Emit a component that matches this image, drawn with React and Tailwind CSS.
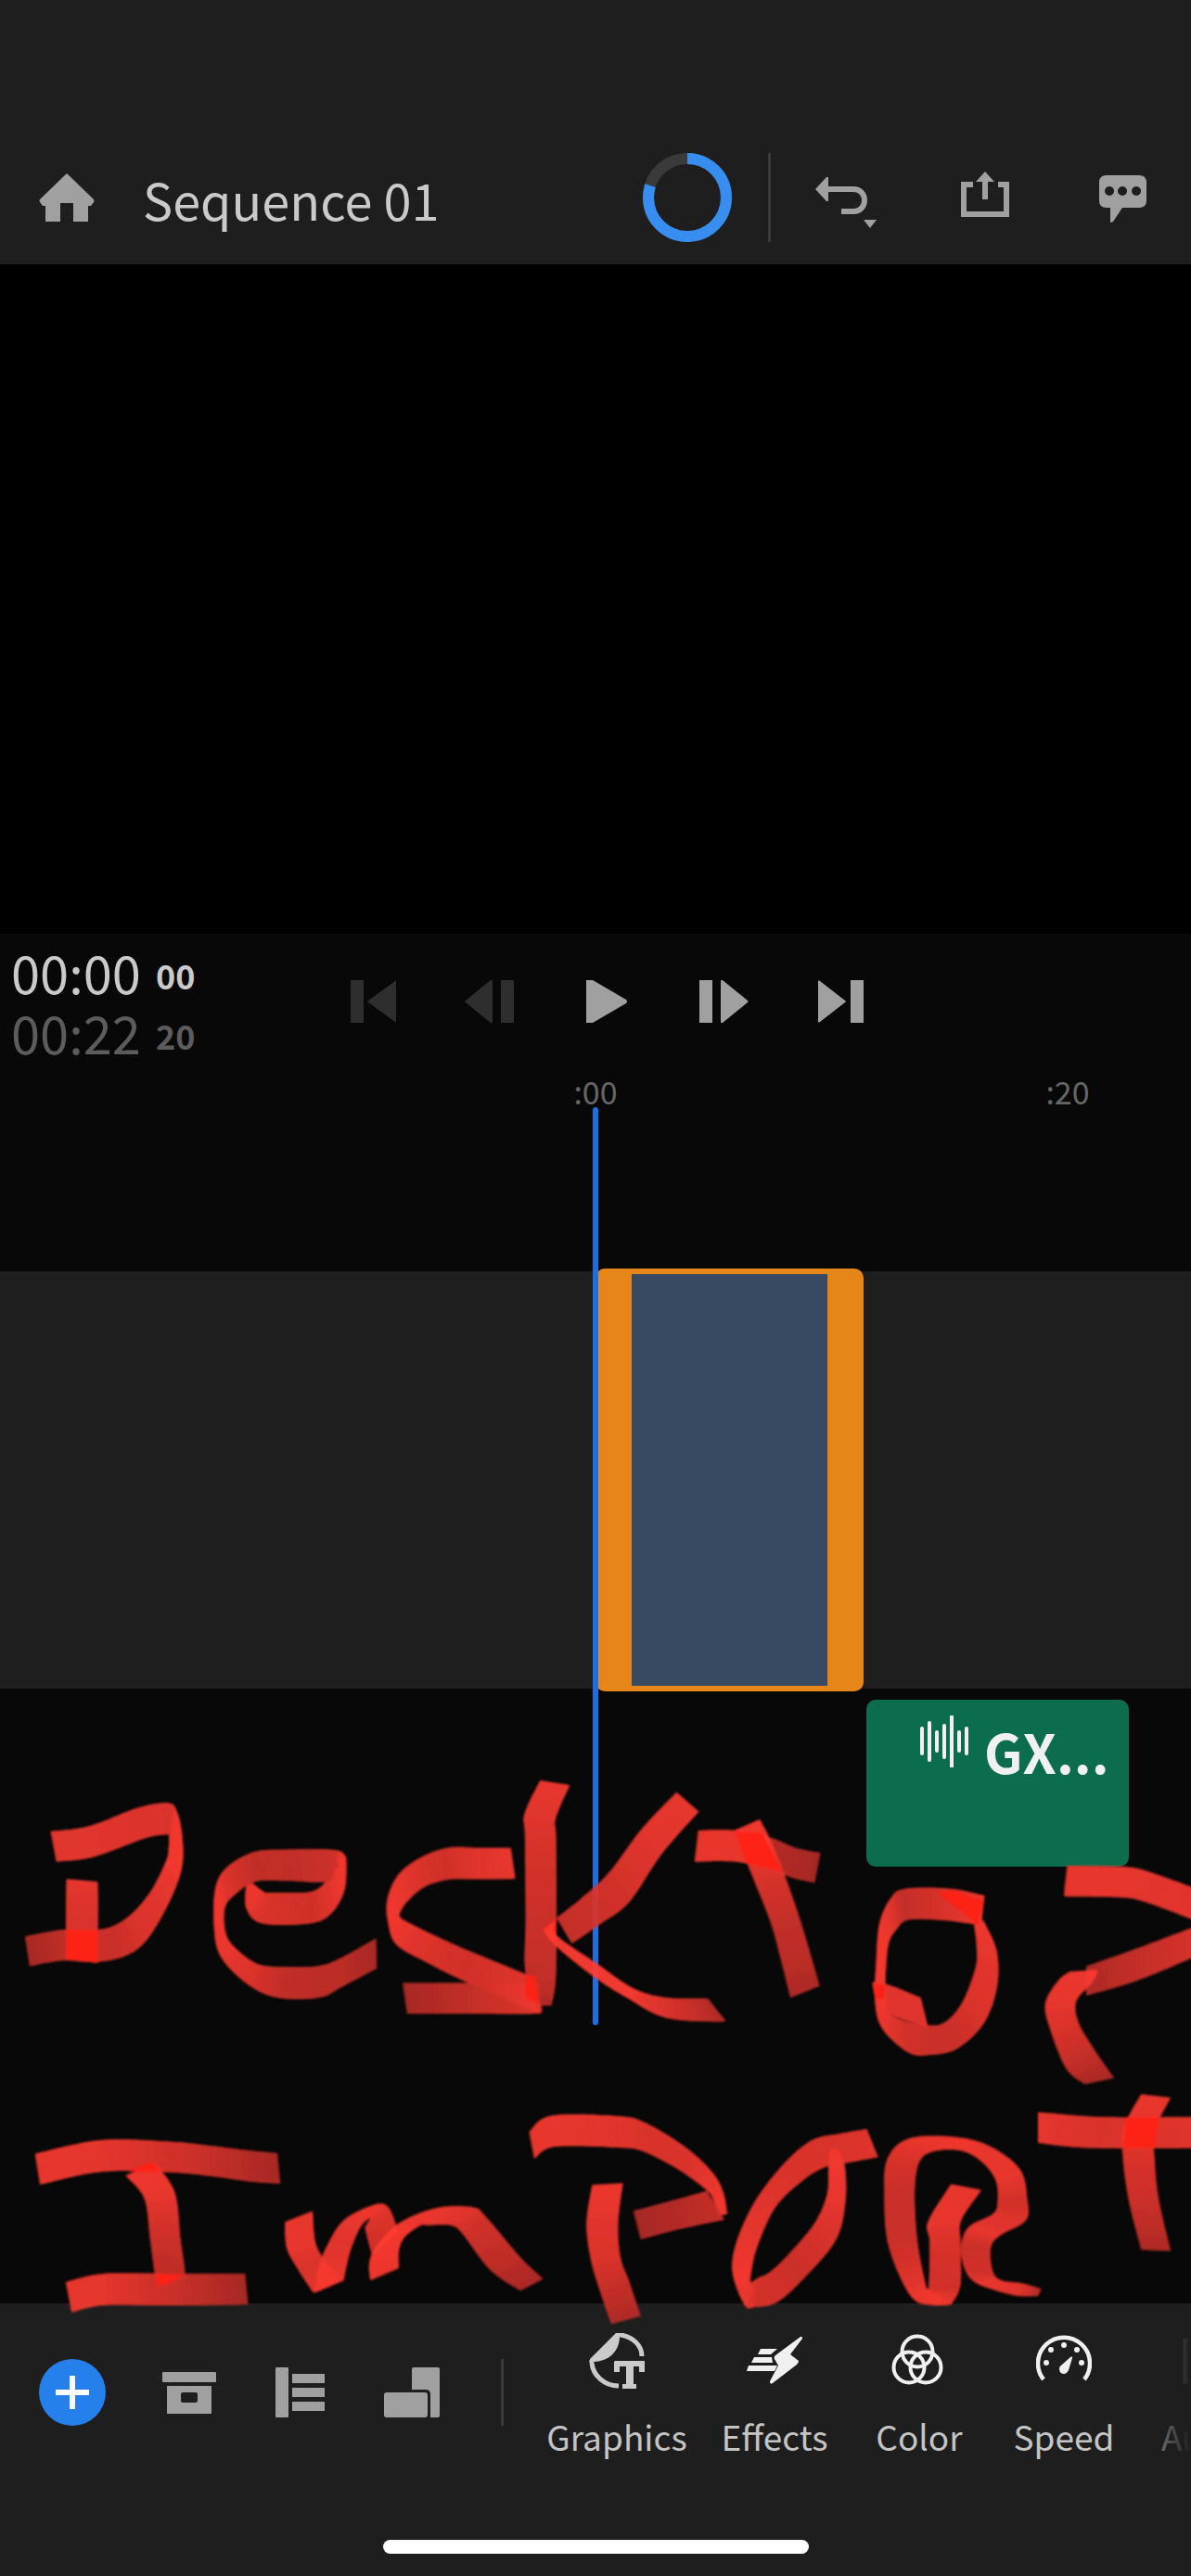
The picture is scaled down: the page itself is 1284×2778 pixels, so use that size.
import React from "react";

const FONT = "font-['Noto_Sans_CJK_SC','Noto_Sans',sans-serif]";

function Icon({ box, className, children }) {
  return (
    <svg viewBox={box} className={className} fill="currentColor" aria-hidden="true">
      {children}
    </svg>
  );
}

/* ---------- Freehand annotation ---------- */

// A ribbon is a list of [x1, y1, x2, y2, shade]: both edges of the marker and how worn it is.
const upperLeft = [
  [[133,222,148,320,0.2],[235,205,245,305,0.2],[360,147,385,243,0.25],[440,130,443,232,0.3],[465,155,445,234,0],[480,240,444,275,0],[478,345,438,315,0],[440,465,400,410,0.2],[385,575,350,485,0.3],[330,625,300,527,0.5],[250,645,250,541,0.5],[165,640,160,541,0.7],[78,658,66,562,1]],
  [[175,376,257,385,0.1],[174,460,258,460,0.25],[173,635,257,648,0.4]],
  [[660,385,648,395,0],[695,418,648,470,0.1],[715,420,690,520,0.3],[815,418,815,520,0.4],[855,388,870,490,0.2],[885,340,905,420,0],[888,310,912,340,0],[884,320,906,296,0],[866,382,870,281,0.5],[760,382,750,281,0.6],[675,384,670,288,0.6],[620,425,600,335,0.3],[592,470,568,400,0],[594,550,563,520,0],[620,600,580,625,0.1],[680,652,650,715,0.3],[750,660,730,760,0.6],[840,657,840,760,0.7],[900,630,900,725,0.7],[990,568,992,665,1]],
  [[1345,275,1357,375,0.1],[1260,275,1260,377,0.2],[1180,275,1185,377,0.4],[1110,305,1120,400,0.3],[1050,360,1075,445,0.1],[1020,440,1055,480,0],[1022,520,1054,500,0],[1045,590,1080,520,0.1],[1130,650,1150,562,0.3],[1220,705,1230,606,0.4],[1415,808,1392,688,0.2]],
  [[1418,700,1422,800,0.1],[1400,712,1410,812,0.2],[1240,712,1240,812,0.6],[1060,712,1072,812,1]],
  [[1422,57,1500,72,0.1],[1381,165,1463,180,0.2],[1382,240,1464,245,0.3],[1384,500,1465,500,0.5],[1384,680,1463,700,0.6],[1425,785,1452,785,0.9]],
];
const upperLeftHot = [
  [[175,541,257,541],[175,635,257,647]],
  [[1385,690,1410,690],[1383,760,1420,780]],
  [[1465,502,1428,540],[1465,575,1450,575]],
];
const upperRight = [
  [[297,455,352,518,0.1],[210,575,260,655,0.2],[130,715,180,810,0.4],[60,800,110,880,0.5],[0,862,38,945,0.6]],
  [[0,870,-33,900,0],[0,918,0,955,0],[100,1010,95,1055,0],[190,1090,180,1125,0],[270,1120,270,1185,0.3],[365,1122,400,1198,0.8],[374,1127,417,1192,1]],
  [[350,579,341,680,0.1],[440,579,450,681,0.1],[530,603,545,715,0.8],[590,635,590,735,0.9],[652,652,638,748,1]],
  [[440,578,502,543,0],[460,650,525,600,0],[485,730,560,710,0.3],[530,880,600,860,0.6],[555,1000,630,990,0.7],[578,1120,650,1082,0.9]],
  [[1058,790,1050,886,0],[970,767,960,870,0.3],[860,768,870,868,0.6],[825,800,840,900,0.2],[798,880,822,940,0],[790,1000,815,1010,0],[787,1130,812,1130,0],[805,1220,822,1170,0.1],[870,1298,860,1195,0.4],[925,1305,925,1210,0.5],[990,1285,965,1195,0.5],[1055,1205,1005,1130,0.3],[1088,1090,1036,1020,0.2],[1088,970,1038,950,0.1],[1055,870,1032,885,0]],
  [[780,1070,785,1110,0],[820,1078,822,1172,0.2],[900,1120,918,1215,0.2]],
  [[1262,692,1253,792,0.1],[1410,697,1385,795,0.1],[1480,720,1450,808,0.15],[1590,772,1590,876,0.2]],
  [[1590,884,1590,980,0.3],[1440,958,1440,1062,0.6],[1310,1018,1310,1113,0.9]],
  [[1338,1030,1270,1035,0],[1325,1070,1240,1065,0.1],[1285,1130,1208,1140,0.1],[1290,1200,1222,1230,0.3],[1330,1290,1260,1350,0.6],[1378,1380,1305,1400,1]],
];
const upperRightHot = [
  [[440,582,508,588],[470,685,558,712]],
  [[980,772,942,780],[1054,806,1042,885]],
  [[784,1075,812,1080],[790,1125,808,1125]],
];
const lowerLeft = [
  [[92,245,105,345,0.1],[265,201,268,303,0.15],[450,206,450,305,0.4],[560,220,560,318,0.6],[660,235,660,335,0.8],[730,243,738,342,1]],
  [[330,315,408,275,0],[380,390,460,370,0.1],[395,520,475,520,0.5],[408,640,487,640,0.7],[415,675,470,655,0.5]],
  [[173,660,188,758,0.1],[275,633,275,735,0.15],[450,633,450,736,0.5],[645,633,653,733,1]],
  [[750,465,823,430,0.1],[755,550,830,530,0.1],[785,620,855,590,0.3],[825,695,900,655,0.1]],
  [[830,695,905,655,0.1],[838,620,912,610,0.1],[858,550,925,550,0.2],[905,460,950,480,0.1],[985,410,975,452,0],[1020,415,965,475,0.2],[1040,465,962,490,0.3],[1045,500,980,575,0.5]],
  [[975,655,1050,615,0.1],[972,600,1050,560,0],[990,545,1065,515,0],[1050,470,1105,478,0],[1150,420,1130,476,0.1],[1245,418,1185,476,0.2],[1280,450,1215,500,0.4],[1370,580,1290,620,0.7],[1430,650,1370,688,1]],
];
const lowerLeftHot = [
  [[335,302,392,274],[420,302,410,280]],
  [[410,635,485,635],[415,672,445,665]],
];
const lowerRight = [
  [[-68,205,-55,292,0.1],[-14,152,-5,252,0.1],[150,153,155,255,0.2],[220,175,215,268,0.3],[320,255,300,325,0.3],[385,335,370,392,0.1],[412,400,388,425,0],[422,470,400,475,0]],
  [[372,395,415,488,0.6],[290,425,300,520,0.8],[190,460,208,552,1]],
  [[88,375,164,370,0],[74,500,152,500,0.2],[85,620,158,610,0.3],[110,730,180,690,0.6],[135,825,208,800,0.9]],
  [[767,195,795,286,0.2],[700,210,715,305,0.3],[630,232,660,320,0.3],[560,310,605,365,0.3],[490,430,540,450,0.2],[445,560,495,580,0.1],[435,660,480,670,0],[465,765,482,690,0.1],[490,771,500,675,0.4],[545,755,525,660,0.4],[610,680,570,605,0.5],[690,555,635,505,0.3],[714,430,668,410,0.1],[712,310,672,320,0],[695,260,675,260,0]],
  [[975,373,1050,392,0.1],[918,495,1000,490,0.1],[922,560,998,560,0.3],[920,700,998,700,0.4],[915,712,975,763,0]],
  [[915,710,975,763,0],[914,706,930,765,0],[912,700,875,735,0.1],[892,560,820,570,0.5],[885,400,810,400,0.5],[897,300,818,290,0.3],[935,266,870,226,0.1],[1000,265,980,220,0],[1050,300,1070,250,0.1],[1085,360,1145,325,0.1],[1090,430,1163,420,0.4],[1078,470,1160,490,0.25],[1020,510,1095,540,0.1],[1000,570,1073,580,0.5],[1008,645,1078,655,0.4],[1040,695,1100,685,0.1],[1130,732,1150,694,0.2],[1190,735,1198,712,0.9]],
  [[1190,140,1190,240,0.1],[1350,156,1330,257,0.3],[1590,156,1590,257,0.2]],
  [[1445,82,1518,93,0.1],[1402,190,1478,200,0.1],[1400,290,1478,290,0.3],[1415,430,1488,420,0.5],[1445,585,1518,590,0.9]],
];
const lowerRightHot = [[[1410,156,1490,156],[1400,256,1478,256]]];

const spline = (a, b, c, d, t) =>
  0.5 * (2 * b + (c - a) * t + (2 * a - 5 * b + 4 * c - d) * t * t + (3 * b - a - 3 * c + d) * t * t * t);

function sample(points) {
  const out = [];
  for (let i = 0; i < points.length - 1; i++) {
    const a = points[Math.max(i - 1, 0)];
    const b = points[i];
    const c = points[i + 1];
    const d = points[Math.min(i + 2, points.length - 1)];
    const span = Math.max(Math.hypot(c[0] - b[0], c[1] - b[1]), Math.hypot(c[2] - b[2], c[3] - b[3]));
    const steps = Math.max(4, Math.round(span / 9));
    for (let s = 0; s < steps; s++) {
      const t = s / steps;
      out.push([0, 1, 2, 3].map((k) => spline(a[k], b[k], c[k], d[k], t)).concat(b[4] + (c[4] - b[4]) * t));
    }
  }
  out.push(points[points.length - 1]);
  return out;
}

function tone(s) {
  const mix = (a, b) => Math.round(a + (b - a) * s);
  return `rgb(${mix(255, 175)},${mix(60, 43)},${mix(50, 39)})`;
}

function Ribbon({ points }) {
  const pts = sample(points);
  return (
    <g opacity="0.94">
      {pts.slice(0, -1).map((p, i) => {
        const q = pts[Math.min(i + 2, pts.length - 1)];
        const m = pts[i + 1];
        return (
          <polygon
            key={i}
            fill={tone(p[4])}
            points={`${p[0]},${p[1]} ${m[0]},${m[1]} ${q[0]},${q[1]} ${q[2]},${q[3]} ${m[2]},${m[3]} ${p[2]},${p[3]}`}
          />
        );
      })}
    </g>
  );
}

function Scribble({ strokes, hot, transform }) {
  return (
    <g transform={transform}>
      {strokes.map((s, i) => (
        <Ribbon key={i} points={s} />
      ))}
      {hot.map(([a, b], i) => (
        <polygon key={i} fill="#ff1f15" fillOpacity="0.9" points={`${a[0]},${a[1]} ${a[2]},${a[3]} ${b[2]},${b[3]} ${b[0]},${b[1]}`} />
      ))}
    </g>
  );
}

function Annotation() {
  return (
    <svg
      viewBox="0 0 1284 660"
      role="img"
      aria-label="Handwritten note: Desktop import"
      className="pointer-events-none absolute left-0 top-[736px] z-20 w-full"
    >
      <defs>
        <filter id="soft" x="-5%" y="-5%" width="110%" height="110%">
          <feGaussianBlur stdDeviation="1" />
        </filter>
      </defs>
      <g filter="url(#soft)">
        <Scribble strokes={upperLeft} hot={upperLeftHot} transform="translate(0 20) scale(0.4095 0.3333)" />
        <Scribble strokes={upperRight} hot={upperRightHot} transform="translate(600 -100) scale(0.4362 0.3333)" />
        <Scribble strokes={lowerLeft} hot={lowerLeftHot} transform="translate(0 360) scale(0.4095 0.3333)" />
        <Scribble strokes={lowerRight} hot={lowerRightHot} transform="translate(600 350) scale(0.4362 0.3333)" />
      </g>
    </svg>
  );
}

/* ---------- Header ---------- */

function Header() {
  return (
    <header className="flex items-center bg-[#1e1e1e] pt-[141px] pr-[38px] pl-9 text-[#a0a0a0]">
      <button aria-label="Home">
        <Icon box="36 177 72 72" className="size-[72px]">
          <path d="M72 187 L101 215 Q102 217 101 218 L98 222 H95 V239 H79 V219 H65 V239 H49 V222 H46 L43 218 Q42 217 43 215 Z" />
        </Icon>
      </button>
      <h1 className="ml-[46px] pt-1 text-[54px] leading-[140px] text-[#cacaca]">Sequence 01</h1>
      <div className="ml-auto flex items-center">
        <svg viewBox="0 0 96 96" className="size-24" role="img" aria-label="Sync progress 80%">
          <circle cx="48" cy="48" r="42" fill="none" stroke="#3a3a3a" strokeWidth="12" />
          <circle cx="48" cy="48" r="42" fill="none" stroke="#378ef0" strokeWidth="12" pathLength="100" strokeDasharray="80 100" transform="rotate(-90 48 48)" />
        </svg>
        <div className="ml-[39px] h-24 w-[3px] bg-[#3a3a3a]" />
        <button aria-label="Undo" className="ml-[45px]">
          <Icon box="876 177 72 72" className="size-[72px]">
            <path d="M879 204 L891 191 H893 V201 H920 C940 201 940 231 920 231 H907 V225 H920 C932 225 932 207 920 207 H893 V217 H891 Z" />
            <path d="M931 237 H945 L938 246 Z" />
          </Icon>
        </button>
        <button aria-label="Share" className="ml-[78px]">
          <Icon box="1026 177 72 72" className="size-[72px]">
            <path d="M1062 185 L1072 196 H1065 V215 H1059 V196 H1052 Z" />
            <path d="M1036 196 H1049 V202 H1042 V228 H1082 V202 H1076 V196 H1088 V234 H1036 Z" />
          </Icon>
        </button>
        <button aria-label="Comments" className="ml-[76px]">
          <Icon box="1174 177 72 72" className="size-[72px]">
            <path fillRule="evenodd" d="M1193 189 H1228 Q1236 189 1236 197 V216 Q1236 224 1228 224 H1210 L1200 239 Q1197 241 1197 239 V224 H1193 Q1185 224 1185 216 V197 Q1185 189 1193 189 Z M1196 201 a5 5 0 1 0 .1 0 Z M1210 201 a5 5 0 1 0 .1 0 Z M1225 201 a5 5 0 1 0 .1 0 Z" />
          </Icon>
        </button>
      </div>
    </header>
  );
}

/* ---------- Transport ---------- */

const transport = [
  { label: "Go to start", off: true, d: "M12 13 H26 V59 H12 Z M60 14 Q61 13 61 15 V57 Q61 59 60 58 L31 37 Q30 36 31 35 Z" },
  { label: "Step back", off: true, d: "M48 13 H62 V59 H48 Z M37 13 Q39 12 39 15 V57 Q39 60 37 59 L10 37 Q9 36 10 35 Z" },
  { label: "Play", d: "M14 13 H21 L57 34 Q59 36 57 38 L21 59 H14 Z" },
  { label: "Step forward", d: "M10 13 H24 V59 H10 Z M35 13 Q33 12 33 15 V57 Q33 60 35 59 L62 37 Q63 36 62 35 Z" },
  { label: "Go to end", d: "M47 13 H61 V59 H47 Z M14 14 Q12 12 12 15 V57 Q12 60 14 58 L41 37 Q43 36 41 35 Z" },
];

function Timecode({ time, frames, className }) {
  return (
    <div className={className}>
      <span className="text-[56px] leading-[65px]">{time}</span>
      <span className="ml-4 pt-2 text-[36px] leading-[57px] font-bold">{frames}</span>
    </div>
  );
}

function Transport() {
  return (
    <section className="flex items-center pt-2" aria-label="Playback">
      <div className="w-[339px] shrink-0 pl-3">
        <Timecode time="00:00" frames="00" className="flex items-center text-[#cacaca]" />
        <Timecode time="00:22" frames="20" className="flex items-center text-[#5c5c5c]" />
      </div>
      {transport.map((b) => (
        <button key={b.label} aria-label={b.label} disabled={b.off} className="flex w-[126px] justify-center text-[#a0a0a0] disabled:text-[#2e2e2e]">
          <Icon box="0 0 72 72" className="size-[72px]">
            <path d={b.d} />
          </Icon>
        </button>
      ))}
    </section>
  );
}

/* ---------- Timeline ---------- */

const wave = [[2, 14, 41], [10, 8, 48], [18, 18, 38], [26, 11, 45], [34, 1, 55], [42, 18, 38], [50, 14, 41]];

function Timeline() {
  return (
    <section className="relative flex-1 pt-3" aria-label="Timeline">
      <div className="flex pl-[50%] text-center text-[34px] leading-10 text-[#666]">
        <span className="-ml-7 w-14">:00</span>
        <span className="ml-[453px] w-14">:20</span>
      </div>
      <div className="absolute top-[49px] left-1/2 z-10 h-[990px] w-[6px] -translate-x-1/2 rounded-full bg-[#1b6fe0]" />
      <div className="mt-[174px] flow-root bg-[#1e1e1e] pl-[50%]">
        <div className="relative -my-[3px] h-[456px] w-[289px] rounded-[10px] border-x-[39px] border-y-[6px] border-[#e68619] bg-[#374a61]" />
      </div>
      <div className="mt-3 pl-[50%]">
        <div className="ml-[292px] flex h-[180px] w-[283px] items-start gap-[15px] rounded-[10px] bg-[#0b6c4e] pt-[17px] pl-[58px] text-[#f0f0f0]">
          <Icon box="0 0 54 56" className="h-14 w-[54px] shrink-0">
            {wave.map(([x, y1, y2]) => (
              <path key={x} d={`M${x} ${y1} V${y2}`} stroke="currentColor" strokeWidth="4" strokeLinecap="round" />
            ))}
          </Icon>
          <span className="text-[58px] leading-[76px] font-bold">GX...</span>
        </div>
      </div>
      <Annotation />
    </section>
  );
}

/* ---------- Toolbar ---------- */

const tools = [
  {
    label: "Graphics",
    cls: "w-[170px] text-[#cacaca]",
    art: (
      <>
        <path d="M3 32 C4 45 16 57 32 57" fill="none" stroke="currentColor" strokeWidth="5" />
        <path d="M34 2 C47 4 57 13 57 25" fill="none" stroke="currentColor" strokeWidth="5" />
        <path d="M29 0 H36 L33 5 C32 20 22 30 6 31 L2 33 L0 31 Q1 27 3 26 Z" />
        <path d="M28 30 H60 V42 H54 V36 H48 V55 H51 V60 H36 V55 H40 V36 H33 V42 H27 V31 Z" />
      </>
    ),
  },
  {
    label: "Effects",
    cls: "w-[170px] text-[#f0f0f0]",
    art: (
      <>
        <path d="M58 4 Q60 3 60 6 L47 23 L56 30 Q56 32 54 34 L28 54 Q25 56 25 52 L34 35 L30 28 Q29 26 31 24 Z" />
        <path d="M15 17 H33 L26 23 H12 Z M8 26 H27 L28 32 H5 Z M2 35 H33 L30 41 H0 Z" />
      </>
    ),
  },
  {
    label: "Color",
    cls: "w-[142px] text-[#f0f0f0]",
    art: (
      <g fill="none" stroke="currentColor" strokeWidth="4">
        <circle cx="28" cy="20" r="16.5" />
        <circle cx="19" cy="37" r="16.5" />
        <circle cx="37" cy="37" r="16.5" />
      </g>
    ),
  },
  {
    label: "Speed",
    cls: "w-[170px] text-[#f0f0f0]",
    art: (
      <>
        <path d="M8 50 A28 28 0 1 1 52 50" fill="none" stroke="currentColor" strokeWidth="4.5" />
        <circle cx="11" cy="32" r="3" />
        <circle cx="16" cy="18" r="3" />
        <circle cx="30" cy="13" r="3" />
        <circle cx="44" cy="18" r="3" />
        <circle cx="49" cy="32" r="3" />
        <path d="M37 26 Q39 24 39 27 L35 40 Q33 44 30 44 Q25 44 25 38 Q25 36 28 34 Z" />
      </>
    ),
  },
  {
    label: "Audio",
    cls: "w-[140px] text-[#cacaca]",
    art: (
      <path d="M6 8 H56 V52 H6 Z M6 30 H56" fill="none" stroke="currentColor" strokeWidth="5" />
    ),
  },
];

function Toolbar() {
  return (
    <footer className="bg-[#1e1e1e] pb-6">
      <div className="relative flex items-start overflow-hidden pt-8">
        <div className="mt-7 flex shrink-0 items-center pl-[42px] text-[#a0a0a0]">
          <button aria-label="Add media" className="rounded-full bg-[#2680eb] text-white">
            <Icon box="0 0 72 72" className="size-[72px]">
              <path d="M33 18 H39 V33 H54 V39 H39 V54 H33 V39 H18 V33 H33 Z" />
            </Icon>
          </button>
          <button aria-label="Project" className="ml-[54px]">
            <Icon box="168 2544 72 72" className="size-[72px]">
              <rect x="175" y="2558" width="58" height="11" rx="1" />
              <path fillRule="evenodd" d="M180 2573 H228 V2603 H180 Z M197 2580 Q195 2580 195 2582 V2589 Q195 2591 197 2591 H211 Q213 2591 213 2589 V2582 Q213 2580 211 2580 Z" />
            </Icon>
          </button>
          <button aria-label="Track controls" className="ml-12">
            <Icon box="288 2544 72 72" className="size-[72px]">
              <rect x="297" y="2553" width="14" height="54" rx="1" />
              <rect x="315" y="2560" width="35" height="10" />
              <rect x="315" y="2575" width="35" height="10" />
              <rect x="315" y="2590" width="35" height="10" />
            </Icon>
          </button>
          <button aria-label="Orientation" className="ml-12">
            <Icon box="408 2544 72 72" className="size-[72px]">
              <path d="M446 2553 H472 Q474 2553 474 2555 V2605 Q474 2607 472 2607 H464 V2582 Q464 2577 459 2577 H444 V2555 Q444 2553 446 2553 Z" />
              <rect x="414" y="2580" width="47" height="27" rx="3" />
            </Icon>
          </button>
          <div className="ml-[60px] h-[72px] w-[3px] bg-[#3a3a3a]" />
        </div>
        <nav className="ml-[37px] flex" aria-label="Tools">
          {tools.map((t) => (
            <button key={t.label} className={`flex shrink-0 flex-col items-center gap-5 ${t.cls}`}>
              <Icon box="0 0 60 60" className="size-[60px]">
                {t.art}
              </Icon>
              <span className="text-[37px] leading-[62px] text-[#c4c4c4]">{t.label}</span>
            </button>
          ))}
        </nav>
        <div className="pointer-events-none absolute inset-y-0 right-0 w-[70px] bg-linear-to-r from-transparent to-[#1e1e1e]" />
      </div>
      <div className="mx-auto mt-[81px] h-[15px] w-[459px] rounded-full bg-white" />
    </footer>
  );
}

export default function App() {
  return (
    <div className={`flex min-h-screen flex-col overflow-x-clip bg-[#080808] ${FONT}`}>
      <Header />
      <main className="flex flex-1 flex-col">
        <div className="aspect-video w-full bg-black" role="img" aria-label="Program monitor" />
        <Transport />
        <Timeline />
      </main>
      <Toolbar />
    </div>
  );
}
